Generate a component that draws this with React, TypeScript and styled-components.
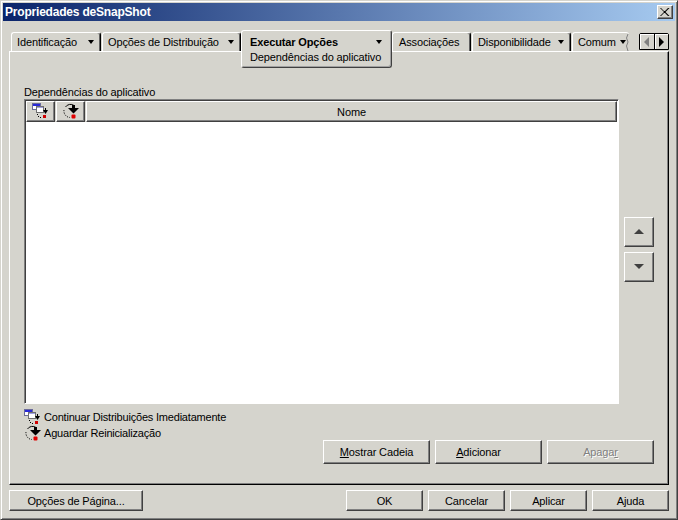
import React from 'react';
import styled, { createGlobalStyle } from 'styled-components';

const Global = createGlobalStyle`
  html, body { margin: 0; padding: 0; background: #d5d4cd; }
  body { font-family: "Liberation Sans", Arial, sans-serif; font-size: 11px; letter-spacing: -0.13px; color: #000; }
`;

const face = '#d5d4cd';

const Win = styled.div`
  box-sizing: border-box;
  width: 678px;
  height: 520px;
  display: flex;
  flex-direction: column;
  padding: 1px;
  background: ${face};
  border-style: solid;
  border-width: 1px;
  border-color: ${face} #404040 #404040 ${face};
  box-shadow: inset 1px 1px #fff, inset -1px -1px #808080;
`;

const TitleBar = styled.div`
  flex: none;
  height: 18px;
  margin: 1px 1px 0;
  padding: 0 2px;
  display: flex;
  align-items: center;
  justify-content: space-between;
  background: linear-gradient(to right, #0a246a, #a6caf0);
  color: #fff;
  font-weight: bold;
  font-size: 12px;
  letter-spacing: -0.2px;
`;

const Raised = styled.button<{ $w?: number; $h?: number; $pr?: number }>`
  box-sizing: border-box;
  flex: none;
  margin: 0;
  width: ${p => (p.$w ? `${p.$w}px` : 'auto')};
  height: ${p => (p.$h ? `${p.$h}px` : 'auto')};
  padding: 0 ${p => p.$pr || 0}px 0 0;
  display: flex;
  align-items: center;
  justify-content: center;
  background: ${face};
  color: #000;
  font: inherit;
  letter-spacing: inherit;
  border-style: solid;
  border-width: 1px;
  border-color: #fff #404040 #404040 #fff;
  box-shadow: inset -1px -1px #808080;

  &:disabled {
    color: #808080;
    text-shadow: 1px 1px #fff;
  }
`;

const CloseBtn = styled(Raised)`
  width: 16px;
  height: 14px;
`;

const Body = styled.div`
  flex: 1;
  min-height: 0;
  display: flex;
  flex-direction: column;
  padding: 9px 7px 7px;
`;

const TabRow = styled.div`
  flex: none;
  height: 21px;
  display: flex;
  align-items: flex-end;
  padding-left: 2px;
`;

const Tab = styled.div<{ $w: number; $open?: boolean; $cut?: boolean }>`
  box-sizing: border-box;
  flex: none;
  position: relative;
  width: ${p => p.$w}px;
  height: 19px;
  margin-right: ${p => (p.$open ? 0 : 1)}px;
  padding: 0 ${p => (p.$cut ? 3 : 6)}px 0 5px;
  display: flex;
  align-items: center;
  justify-content: space-between;
  border-top: 1px solid #fff;
  border-left: 1px solid #fff;
  border-right: ${p => (p.$cut ? 'none' : '1px solid #000')};
  box-shadow: ${p => (p.$cut ? 'none' : 'inset -1px 0 #606060')};
  border-radius: 3px 3px 0 0;
  white-space: nowrap;
`;

const PlainTabLabel = styled.span`
  margin-left: 1px;
`;

const OpenTab = styled.div<{ $w: number }>`
  box-sizing: border-box;
  flex: none;
  position: relative;
  z-index: 1;
  align-self: flex-start;
  width: ${p => p.$w}px;
  height: 38px;
  padding: 4px 8px 0 8px;
  background: ${face};
  border: 1px solid #fff;
  border-right-color: #404040;
  border-bottom-color: #404040;
  border-radius: 3px;
  box-shadow: inset -1px -1px #a0a0a0;
  white-space: nowrap;
`;

const OpenTitle = styled.div`
  display: flex;
  align-items: center;
  justify-content: space-between;
  height: 13px;
  padding-right: 1px;
  font-weight: bold;
`;

const OpenSub = styled.div`
  margin-top: 3px;
  line-height: 13px;
`;

const Arrow = styled.span`
  flex: none;
  width: 0;
  height: 0;
  border-style: solid;
  border-width: 4px 3.5px 0 3.5px;
  border-color: #000 transparent transparent transparent;
`;

const Torn = styled.svg`
  position: absolute;
  right: 0;
  top: 1px;
`;

const Scroller = styled.div`
  flex: none;
  margin: 0 0 1px auto;
  width: 30px;
  height: 17px;
  box-sizing: border-box;
  display: flex;
  border: 1px solid #000;
  border-radius: 2px 2px 0 0;
`;

const ScrollBtn = styled(Raised)`
  flex: 1;
  height: 15px;
  border: none;
  box-shadow: inset 1px 1px #fff;

  & + & {
    border-left: 1px solid #000;
  }

  &:disabled {
    text-shadow: none;
  }
`;

const Panel = styled.div`
  box-sizing: border-box;
  flex: none;
  height: 434px;
  padding: 34px 14px 0 14px;
  display: flex;
  flex-direction: column;
  border: 1px solid #fff;
  border-right-color: #000;
  border-bottom-color: #000;
  box-shadow: inset -1px -1px #808080;
`;

const FieldLabel = styled.div`
  line-height: 13px;
  height: 13px;
`;

const ListRow = styled.div`
  display: flex;
  align-items: center;
  gap: 5px;
`;

const List = styled.div`
  box-sizing: border-box;
  width: 595px;
  height: 305px;
  display: flex;
  flex-direction: column;
  background: #fff;
  border: 1px solid #808080;
  border-right-color: #fff;
  border-bottom-color: #fff;
  box-shadow: inset 1px 1px #404040;
`;

const ListHead = styled.div`
  flex: none;
  display: flex;
  gap: 1px;
  height: 21px;
  margin: 1px 1px 0 1px;
  background: ${face};
`;

const HeadCell = styled(Raised)<{ $grow?: boolean }>`
  height: 21px;
  flex: ${p => (p.$grow ? 1 : 'none')};
`;

const SideButtons = styled.div`
  display: flex;
  flex-direction: column;
  gap: 5px;
  margin-bottom: 5px;
`;

const Legend = styled.div`
  height: 31px;
  margin-top: 5px;
  display: flex;
  flex-direction: column;
`;

const LegendRow = styled.div`
  height: 16px;
  display: flex;
  align-items: center;
  gap: 3px;
  letter-spacing: -0.2px;
`;

const Actions = styled.div`
  display: flex;
  justify-content: flex-end;
  gap: 5px;
`;

const Footer = styled.div`
  flex: none;
  display: flex;
  gap: 5px;
  padding-top: 5px;
`;

const FooterGap = styled.div`
  flex: 1;
`;

function WindowsIcon() {
  return (
    <svg width="17" height="17" viewBox="0 0 17 17" shapeRendering="crispEdges">
      <rect x="0.5" y="0.5" width="8" height="6" fill="#fff" stroke="#6a6a9a" />
      <rect x="1" y="1" width="7" height="2" fill="#2a2ad8" />
      <rect x="4.5" y="3.5" width="7" height="6" fill="#fff" stroke="#707070" />
      <rect x="5" y="4" width="6" height="1" fill="#a0a0e0" />
      <path d="M5 11h1v1H5zM6 13h1v1H6zM8 14h1v1H8z" fill="#000" />
      <path d="M11 7h5l-2.5 4z" fill="#000" shapeRendering="auto" />
      <path d="M13 5h1v2h-1z" fill="#000" />
      <rect x="11" y="12" width="3" height="3" fill="#d00000" />
    </svg>
  );
}

function RestartIcon() {
  return (
    <svg width="17" height="17" viewBox="0 0 17 17">
      <path d="M3.5 4 A6 6 0 0 1 12 2.5" fill="none" stroke="#000" />
      <path d="M2 7 A6.5 6.5 0 0 0 8 14.5" fill="none" stroke="#000" strokeDasharray="1.2 1.3" />
      <path d="M10 2h3v3h4l-5.5 5.5L6 5h4z" fill="#000" />
      <rect x="9.5" y="11.5" width="4" height="4" rx="1" fill="#e00000" />
    </svg>
  );
}

function Triangle({ dir, color }: { dir: 'up' | 'down' | 'left' | 'right'; color: string }) {
  const pts = {
    up: '0,5 5,0 10,5',
    down: '0,0 10,0 5,5',
    left: '5,0 5,10 0,5',
    right: '0,0 0,10 5,5',
  }[dir];
  const horizontal = dir === 'left' || dir === 'right';
  return (
    <svg width={horizontal ? 5 : 10} height={horizontal ? 10 : 5}>
      <polygon points={pts} fill={color} />
    </svg>
  );
}

export default function App() {
  return (
    <>
      <Global />
      <Win>
        <TitleBar>
          <span>Propriedades deSnapShot</span>
          <CloseBtn aria-label="Fechar">
            <svg width="10" height="8" viewBox="0 0 10 8">
              <path d="M1 0l3 3h1l3-3h1.5l-4 4 4 4H8L5 5H4L1 8h-1l4-4-4-4z" fill="#000" />
            </svg>
          </CloseBtn>
        </TitleBar>
        <Body>
          <TabRow>
            <Tab $w={90}>Identificação <Arrow /></Tab>
            <Tab $w={139} $open>Opções de Distribuição <Arrow /></Tab>
            <OpenTab $w={151}>
              <OpenTitle>Executar Opções <Arrow /></OpenTitle>
              <OpenSub>Dependências do aplicativo</OpenSub>
            </OpenTab>
            <Tab $w={79}><PlainTabLabel>Associações</PlainTabLabel></Tab>
            <Tab $w={99}>Disponibilidade <Arrow /></Tab>
            <Tab $w={57} $cut>
              Comum <Arrow />
              <Torn width="3" height="18" viewBox="0 0 3 18">
                <path d="M2 0 L0.5 4 L2 8 L0.5 12 L2 17" fill="none" stroke="#808080" />
              </Torn>
            </Tab>
            <Scroller>
              <ScrollBtn disabled><Triangle dir="left" color="#808080" /></ScrollBtn>
              <ScrollBtn><Triangle dir="right" color="#000" /></ScrollBtn>
            </Scroller>
          </TabRow>
          <Panel>
            <FieldLabel>Dependências do aplicativo</FieldLabel>
            <ListRow>
              <List>
                <ListHead>
                  <HeadCell $w={29}><WindowsIcon /></HeadCell>
                  <HeadCell $w={29}><RestartIcon /></HeadCell>
                  <HeadCell $grow>Nome</HeadCell>
                </ListHead>
              </List>
              <SideButtons>
                <Raised $w={30} $h={30}><Triangle dir="up" color="#404040" /></Raised>
                <Raised $w={30} $h={30}><Triangle dir="down" color="#404040" /></Raised>
              </SideButtons>
            </ListRow>
            <Legend>
              <LegendRow><WindowsIcon />Continuar Distribuições Imediatamente</LegendRow>
              <LegendRow><RestartIcon />Aguardar Reinicialização</LegendRow>
            </Legend>
            <Actions>
              <Raised $w={107} $h={24}><span><u>M</u>ostrar Cadeia</span></Raised>
              <Raised $w={107} $h={24} $pr={20}><span><u>A</u>dicionar</span></Raised>
              <Raised $w={107} $h={24} disabled><span>Apaga<u>r</u></span></Raised>
            </Actions>
          </Panel>
          <Footer>
            <Raised $w={134} $h={21}><span>Opções de Pá<u>g</u>ina...</span></Raised>
            <FooterGap />
            <Raised $w={77} $h={21}>OK</Raised>
            <Raised $w={77} $h={21}>Cancelar</Raised>
            <Raised $w={77} $h={21}>Aplicar</Raised>
            <Raised $w={77} $h={21}><span>A<u>j</u>uda</span></Raised>
          </Footer>
        </Body>
      </Win>
    </>
  );
}
